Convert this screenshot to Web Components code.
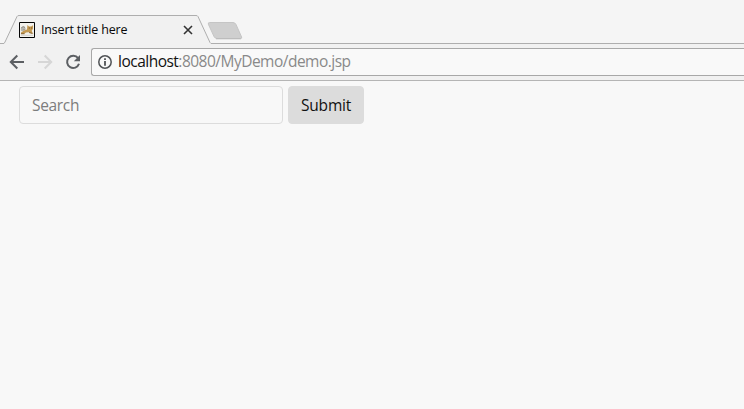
<!DOCTYPE html>
<html lang="en">
<head>
<meta charset="utf-8">
<title>Insert title here</title>
<style>
html,body{margin:0;height:100%;overflow:hidden;background:#f8f8f8;font-family:"Open Sans","Noto Sans",sans-serif}
</style>
</head>
<body>
<browser-window>
  <browser-tab slot="tabs">Insert title here</browser-tab>
  <address-bar slot="toolbar"><span>localhost</span><span slot="path">:8080/MyDemo/demo.jsp</span></address-bar>
  <search-form></search-form>
</browser-window>
<script>
const define = (name, html) => {
  const t = document.createElement('template');
  t.innerHTML = html;
  customElements.define(name, class extends HTMLElement {
    constructor() {
      super();
      this.attachShadow({mode: 'open'}).append(t.content.cloneNode(true));
    }
  });
};

define('nav-buttons', `
<style>:host{display:flex;gap:12px;padding:0 10px 0 9px;align-items:center;flex:none}svg{display:block;width:16px;height:16px;fill:none;stroke:#5c5f63;stroke-width:2}.off{stroke:#d6d6d6}</style>
<svg viewBox="0 0 16 16"><path d="M15 8H2.5M8.3 1.5L1.8 8l6.5 6.5"/></svg>
<svg class="off" viewBox="0 0 16 16"><path d="M1 8h12.5M7.7 1.5L14.2 8l-6.5 6.5"/></svg>
<svg viewBox="0 0 16 16"><path d="M13.1 4.2A6.1 6.1 0 1 0 14 9.8"/><path d="M15 1v6.2H8.8z" fill="#5c5f63" stroke="none"/></svg>`);

define('address-bar', `
<style>
:host{display:flex;align-items:center;box-sizing:border-box;flex:1;height:28px;border:1px solid #a8a8a8;border-right:0;border-radius:3px 0 0 3px;background:#f9f9f9;padding-left:6px;gap:6px;font-size:15.5px;line-height:24px;color:#111;white-space:nowrap}
svg{width:14px;height:14px;flex:none}
.url{letter-spacing:-.51px;padding-bottom:2px}
.path{color:#898989}
</style>
<svg viewBox="0 0 14 14"><circle cx="7" cy="7" r="6.2" fill="none" stroke="#505356" stroke-width="1.5"/><path d="M6.1 3.2h1.8V5H6.1zM6.1 6h1.8v4.8H6.1z" fill="#505356"/></svg>
<div class="url"><slot></slot><span class="path"><slot name="path"></slot></span></div>`);

define('cat-icon', `
<style>:host{display:block;width:16px;height:16px}svg{display:block}</style>
<svg width="16" height="16" viewBox="0 0 16 16"><path d="M.5.5h15v15H.5z" fill="#f3f2ed" stroke="#050505"/><path d="M2 10.6L4.6 8.7 8 7.4 8.4 3l1.7 1.5h2L14 3.2v3.5l-1.3 2 .5 1.5 1.3 1.4h-2.3L10 10.3 7 10.4 5 12H2z" fill="#c59a52"/><path d="M1.8 8.4V6.2L4 4.6l2 .6.8 1.8-2 .8L3 9.5z" fill="#b8b7b1"/><path d="M2.2 5.8l2-1.2 1.8.8M3.8 8.2l2.5-.6" fill="none" stroke="#77736a" stroke-width=".8"/><path d="M2 11.8h3.5M10 10.5l3.5 1" stroke="#76552d" stroke-width=".8"/><path d="M9.8 6h1M12 6h.8" stroke="#6c4e25"/><path d="M2 13.3h12" stroke="#d5d3cc"/></svg>`);

define('browser-tab', `
<style>
:host{display:grid;width:744px;height:44px}
svg,.row{grid-area:1/1}
svg{display:block}
.row{display:flex;align-items:center;height:29px;padding:15px 0 0 19px}
.title{width:141px;margin-left:6px;font-size:12.5px;letter-spacing:-.17px;line-height:20px;color:#080808;white-space:nowrap}
.close{width:12px;height:12px}
</style>
<svg width="744" height="44" viewBox="0 0 744 44">
<path d="M0 44V43.5H4L5 42L17 16.5Q17.5 15.5 19 15.5H196Q197.5 15.5 198 16.5L210 42.5L211 43.5H744V44z" fill="#f1f1f1"/>
<path d="M0 43.5H4L5 42L17 16.5Q17.5 15.5 19 15.5H196Q197.5 15.5 198 16.5L210 42.5L211 43.5H744" fill="none" stroke="#aeaeae"/>
<path d="M209.5 22.5H233Q235 22.5 236 24.5L241.6 37Q242.2 38.5 240.5 38.5H217Q215 38.5 214 36.5L208.4 24.3Q207.8 22.5 209.5 22.5z" fill="#cfcfcf" stroke="#c5c5c5"/>
<path d="M216 38.8H241" stroke="#b5b5b5" stroke-width=".8"/>
</svg>
<div class="row"><cat-icon></cat-icon><div class="title"><slot></slot></div>
<svg class="close" viewBox="0 0 12 12"><path d="M2 2l8 8M10 2l-8 8" stroke="#333" stroke-width="1.6"/></svg></div>`);

define('search-form', `
<style>
:host{display:flex;gap:5px;padding:5px 0 0 19px;font-size:15.5px}
div{box-sizing:border-box;height:38px;line-height:36px;border:1px solid #dcdcdc;border-radius:4px;padding:0 12px}
.field{width:264px;color:#7d7d7d;letter-spacing:-.32px}
.button{width:76px;background:#dcdcdc;color:#111;letter-spacing:-.2px;white-space:nowrap}
</style>
<div class="field" role="searchbox">Search</div><div class="button" role="button">Submit</div>`);

define('browser-window', `
<style>
:host{display:block;width:744px;height:409px;overflow:hidden;background:#f8f8f8}
.tabs{height:44px;background:#f5f5f5}
.bar{display:flex;align-items:center;box-sizing:border-box;height:37px;background:#f1f1f1;border-bottom:1px solid #b5b5b5}
</style>
<div class="tabs"><slot name="tabs"></slot></div>
<div class="bar"><nav-buttons></nav-buttons><slot name="toolbar"></slot></div>
<slot></slot>`);
</script>
</body>
</html>
